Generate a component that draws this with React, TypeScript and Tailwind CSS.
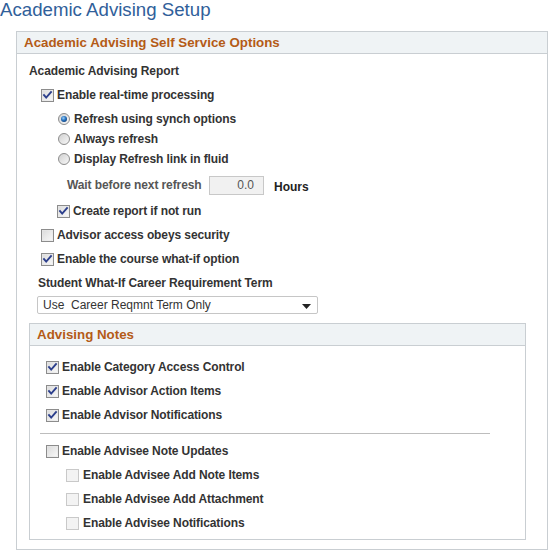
import React from "react";

function CheckBox({ checked = false, disabled = false }: { checked?: boolean; disabled?: boolean }) {
  return (
    <svg width="13" height="13" viewBox="0 0 13 13" className="shrink-0">
      <defs>
        <linearGradient id="cbg" x1="0" y1="0" x2="1" y2="1">
          <stop offset="0" stopColor="#d9d9d9" />
          <stop offset="1" stopColor="#fbfbfb" />
        </linearGradient>
      </defs>
      <rect
        x="0.5"
        y="0.5"
        width="12"
        height="12"
        fill={disabled ? "#f3f3f3" : "url(#cbg)"}
        stroke={disabled ? "#c9c9c9" : "#8c8c8c"}
      />
      {!disabled && <rect x="1.5" y="1.5" width="10" height="10" fill="none" stroke="#e8e8e8" strokeWidth="0.6" />}
      {checked && (
        <path d="M3 6 L5.2 8.6 L10 3.2" stroke="#2c3f8c" strokeWidth="1.9" fill="none" strokeLinecap="square" />
      )}
    </svg>
  );
}

function Radio({ checked = false }: { checked?: boolean }) {
  return (
    <svg width="12" height="12" viewBox="0 0 12 12" className="shrink-0">
      <defs>
        <linearGradient id="rbg" x1="0" y1="0" x2="1" y2="1">
          <stop offset="0" stopColor="#cfcfcf" />
          <stop offset="1" stopColor="#fafafa" />
        </linearGradient>
        <radialGradient id="rdot" cx="0.4" cy="0.35" r="0.7">
          <stop offset="0" stopColor="#9fd0f5" />
          <stop offset="0.5" stopColor="#2c78c4" />
          <stop offset="1" stopColor="#0d3f7e" />
        </radialGradient>
      </defs>
      <circle cx="6" cy="6" r="5.5" fill="url(#rbg)" stroke="#8e8e8e" />
      {checked && <circle cx="6" cy="6" r="3" fill="url(#rdot)" />}
    </svg>
  );
}

function CheckRow({
  label,
  checked,
  disabled,
  pl,
  gap,
  mt,
}: {
  label: string;
  checked?: boolean;
  disabled?: boolean;
  pl: string;
  gap: string;
  mt: string;
}) {
  return (
    <div className={`flex h-[20px] items-center ${pl} ${gap} ${mt}`}>
      <CheckBox checked={checked} disabled={disabled} />
      <span className="text-[12px] font-bold leading-none tracking-[-0.1px] text-[#333]">{label}</span>
    </div>
  );
}

export default function App() {
  return (
    <div className="relative h-[551px] w-[549px] overflow-hidden bg-white font-['Liberation_Sans',Arial,sans-serif] text-[#333]">
      <div className="h-[31px] whitespace-nowrap text-[18.67px] leading-[19px] text-[#30609a]">
        Academic Advising Setup
      </div>

      <div className="ml-[16px] h-[519px] w-[532px] border border-[#c9ced2]">
        <div className="flex h-[22px] items-center border-b border-[#c9ced2] bg-[#eff3f5] pl-[7px] text-[13.33px] font-bold text-[#b45b17]">
          Academic Advising Self Service Options
        </div>

        <div className="mt-[7px] flex h-[20px] items-center pl-[12px] text-[12px] font-bold leading-none tracking-[-0.1px]">
          Academic Advising Report
        </div>

        <CheckRow label="Enable real-time processing" checked pl="pl-[24px]" gap="gap-[3px]" mt="mt-[4px]" />

        <div className="mt-[4px] flex h-[20px] items-center gap-[4px] pl-[41px]">
          <Radio checked />
          <span className="text-[12px] font-bold leading-none tracking-[-0.1px]">Refresh using synch options</span>
        </div>
        <div className="flex h-[20px] items-center gap-[4px] pl-[41px]">
          <Radio />
          <span className="text-[12px] font-bold leading-none tracking-[-0.1px]">Always refresh</span>
        </div>
        <div className="flex h-[20px] items-center gap-[4px] pl-[41px]">
          <Radio />
          <span className="text-[12px] font-bold leading-none tracking-[-0.1px]">Display Refresh link in fluid</span>
        </div>

        <div className="mt-[6px] flex h-[20px] items-center pl-[50px]">
          <span className="w-[142px] text-[12px] font-bold leading-none tracking-[-0.1px] text-[#565656]">
            Wait before next refresh
          </span>
          <div className="flex h-[19px] w-[55px] items-center justify-end border border-[#c8c8c8] bg-[#f1f1f1] pr-[9px] text-[12px] leading-none text-[#555]">
            0.0
          </div>
          <span className="ml-[10px] pt-[3px] text-[12px] font-bold leading-none text-[#222]">Hours</span>
        </div>

        <CheckRow label="Create report if not run" checked pl="pl-[40px]" gap="gap-[3px]" mt="mt-[6px]" />
        <CheckRow label="Advisor access obeys security" pl="pl-[24px]" gap="gap-[3px]" mt="mt-[4px]" />
        <CheckRow label="Enable the course what-if option" checked pl="pl-[24px]" gap="gap-[3px]" mt="mt-[4px]" />

        <div className="mt-[4px] flex h-[20px] items-center pl-[21px] text-[12px] font-bold leading-none tracking-[-0.1px]">
          Student What-If Career Requirement Term
        </div>

        <div className="relative ml-[20px] mt-[3px] flex h-[18px] w-[281px] items-center rounded-[2px] border border-[#c6c6c6] bg-white pl-[5px]">
          <span className="whitespace-pre text-[12px] leading-none text-[#333]">Use  Career Reqmnt Term Only</span>
          <svg width="9" height="5" viewBox="0 0 9 5" className="absolute right-[6px] top-[7px]">
            <path d="M0 0 H9 L4.5 5 Z" fill="#222" />
          </svg>
        </div>

        <div className="ml-[12px] mt-[9px] h-[217px] w-[497px] border border-[#c9ced2]">
          <div className="flex h-[22px] items-center border-b border-[#c9ced2] bg-[#eff3f5] pl-[7px] text-[13.33px] font-bold text-[#b45b17]">
            Advising Notes
          </div>

          <CheckRow label="Enable Category Access Control" checked pl="pl-[16px]" gap="gap-[3px]" mt="mt-[11px]" />
          <CheckRow label="Enable Advisor Action Items" checked pl="pl-[16px]" gap="gap-[3px]" mt="mt-[4px]" />
          <CheckRow label="Enable Advisor Notifications" checked pl="pl-[16px]" gap="gap-[3px]" mt="mt-[4px]" />

          <div className="ml-[10px] mt-[8px] h-px w-[450px] bg-[#bdbdbd]" />

          <CheckRow label="Enable Advisee Note Updates" pl="pl-[16px]" gap="gap-[3px]" mt="mt-[7px]" />
          <CheckRow label="Enable Advisee Add Note Items" disabled pl="pl-[36px]" gap="gap-[4px]" mt="mt-[4px]" />
          <CheckRow label="Enable Advisee Add Attachment" disabled pl="pl-[36px]" gap="gap-[4px]" mt="mt-[4px]" />
          <CheckRow label="Enable Advisee Notifications" disabled pl="pl-[36px]" gap="gap-[4px]" mt="mt-[4px]" />
        </div>
      </div>
    </div>
  );
}
